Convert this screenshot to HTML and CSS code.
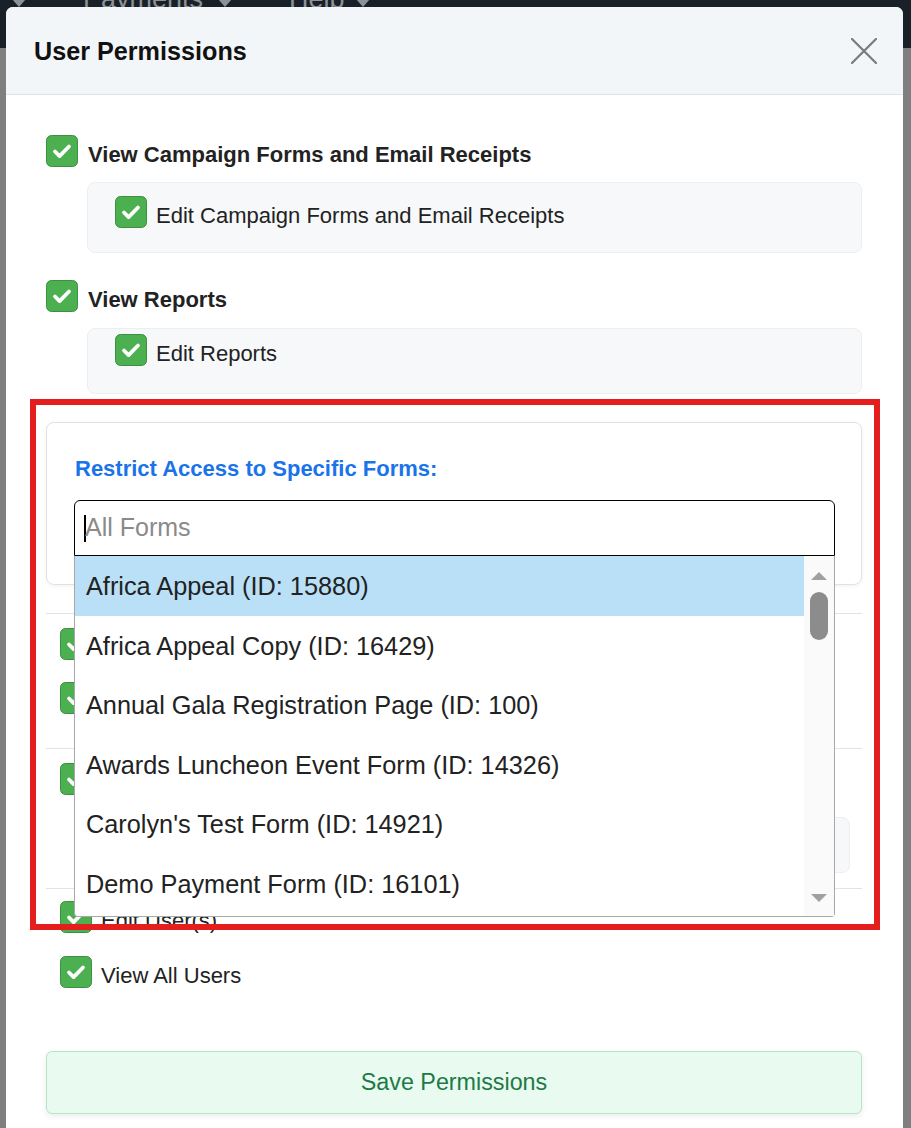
FILE: index.html
```html
<!DOCTYPE html>
<html lang="en">
<head>
<meta charset="utf-8">
<title>User Permissions</title>
<link rel="stylesheet" href="styles.css">
</head>
<body>
<div class="page">
  <nav class="topnav">
    <span class="nav-caret nav-caret--first"><svg viewBox="0 0 14 8" width="14" height="8"><polygon points="0,0 14,0 7,8" fill="#8d9298"/></svg></span>
    <span class="nav-item">Payments</span>
    <span class="nav-caret"><svg viewBox="0 0 14 8" width="14" height="8"><polygon points="0,0 14,0 7,8" fill="#8d9298"/></svg></span>
    <span class="nav-item">Help</span>
    <span class="nav-caret nav-caret--last"><svg viewBox="0 0 14 8" width="14" height="8"><polygon points="0,0 14,0 7,8" fill="#8d9298"/></svg></span>
  </nav>
</div>

<div class="modal">
  <header class="modal-header">
    <h2 class="modal-title">User Permissions</h2>
    <button class="close-btn" aria-label="Close">
      <svg viewBox="0 0 26 26" width="26" height="26"><path d="M1 1L25 25M25 1L1 25" stroke="#7a7a7a" stroke-width="2.2" stroke-linecap="round"/></svg>
    </button>
  </header>

  <div class="modal-body">
    <div class="check-row check-row--main">
      <svg class="cb" viewBox="0 0 32 32"><rect x=".5" y=".5" width="31" height="31" rx="5" fill="#4caf50" stroke="#3d8f41"/><path d="M9 16.5l4.6 4.6 9.4-9.6" fill="none" stroke="#fff" stroke-width="3.8" stroke-linecap="round" stroke-linejoin="round"/></svg>
      <span class="label label--bold">View Campaign Forms and Email Receipts</span>
    </div>
    <div class="sub-box sub-box--first">
      <div class="check-row">
        <svg class="cb" viewBox="0 0 32 32"><rect x=".5" y=".5" width="31" height="31" rx="5" fill="#4caf50" stroke="#3d8f41"/><path d="M9 16.5l4.6 4.6 9.4-9.6" fill="none" stroke="#fff" stroke-width="3.8" stroke-linecap="round" stroke-linejoin="round"/></svg>
        <span class="label">Edit Campaign Forms and Email Receipts</span>
      </div>
    </div>

    <div class="check-row check-row--main check-row--second">
      <svg class="cb" viewBox="0 0 32 32"><rect x=".5" y=".5" width="31" height="31" rx="5" fill="#4caf50" stroke="#3d8f41"/><path d="M9 16.5l4.6 4.6 9.4-9.6" fill="none" stroke="#fff" stroke-width="3.8" stroke-linecap="round" stroke-linejoin="round"/></svg>
      <span class="label label--bold">View Reports</span>
    </div>
    <div class="sub-box sub-box--second">
      <div class="check-row">
        <svg class="cb" viewBox="0 0 32 32"><rect x=".5" y=".5" width="31" height="31" rx="5" fill="#4caf50" stroke="#3d8f41"/><path d="M9 16.5l4.6 4.6 9.4-9.6" fill="none" stroke="#fff" stroke-width="3.8" stroke-linecap="round" stroke-linejoin="round"/></svg>
        <span class="label">Edit Reports</span>
      </div>
    </div>

    <div class="restrict-card">
      <div class="restrict-title">Restrict Access to Specific Forms:</div>
      <div class="select-wrap">
        <div class="select-input"><span class="text-caret"></span><span class="placeholder">All Forms</span></div>
        <div class="dropdown">
          <ul class="options">
            <li class="option option--active">Africa Appeal (ID: 15880)</li>
            <li class="option">Africa Appeal Copy (ID: 16429)</li>
            <li class="option">Annual Gala Registration Page (ID: 100)</li>
            <li class="option">Awards Luncheon Event Form (ID: 14326)</li>
            <li class="option">Carolyn's Test Form (ID: 14921)</li>
            <li class="option">Demo Payment Form (ID: 16101)</li>
          </ul>
          <div class="scrollbar">
            <svg class="sb-arrow" viewBox="0 0 16 8" width="16" height="8"><polygon points="0,8 16,8 8,0" fill="#a0a0a0"/></svg>
            <div class="sb-thumb"></div>
            <div class="sb-fill"></div>
            <svg class="sb-arrow" viewBox="0 0 16 8" width="16" height="8"><polygon points="0,0 16,0 8,8" fill="#a0a0a0"/></svg>
          </div>
        </div>
      </div>
    </div>

    <hr class="sep sep--first">
    <div class="section section--a">
      <div class="check-row">
        <svg class="cb" viewBox="0 0 32 32"><rect x=".5" y=".5" width="31" height="31" rx="5" fill="#4caf50" stroke="#3d8f41"/><path d="M9 16.5l4.6 4.6 9.4-9.6" fill="none" stroke="#fff" stroke-width="3.8" stroke-linecap="round" stroke-linejoin="round"/></svg>
      </div>
      <div class="check-row check-row--gap">
        <svg class="cb" viewBox="0 0 32 32"><rect x=".5" y=".5" width="31" height="31" rx="5" fill="#4caf50" stroke="#3d8f41"/><path d="M9 16.5l4.6 4.6 9.4-9.6" fill="none" stroke="#fff" stroke-width="3.8" stroke-linecap="round" stroke-linejoin="round"/></svg>
      </div>
    </div>
    <hr class="sep sep--b">
    <div class="section section--b">
      <div class="check-row">
        <svg class="cb" viewBox="0 0 32 32"><rect x=".5" y=".5" width="31" height="31" rx="5" fill="#4caf50" stroke="#3d8f41"/><path d="M9 16.5l4.6 4.6 9.4-9.6" fill="none" stroke="#fff" stroke-width="3.8" stroke-linecap="round" stroke-linejoin="round"/></svg>
      </div>
      <div class="inner-box"></div>
    </div>
    <hr class="sep sep--c">
    <div class="section section--c">
      <div class="check-row">
        <svg class="cb" viewBox="0 0 32 32"><rect x=".5" y=".5" width="31" height="31" rx="5" fill="#4caf50" stroke="#3d8f41"/><path d="M9 16.5l4.6 4.6 9.4-9.6" fill="none" stroke="#fff" stroke-width="3.8" stroke-linecap="round" stroke-linejoin="round"/></svg>
        <span class="label">Edit User(s)</span>
      </div>
      <div class="check-row check-row--users">
        <svg class="cb" viewBox="0 0 32 32"><rect x=".5" y=".5" width="31" height="31" rx="5" fill="#4caf50" stroke="#3d8f41"/><path d="M9 16.5l4.6 4.6 9.4-9.6" fill="none" stroke="#fff" stroke-width="3.8" stroke-linecap="round" stroke-linejoin="round"/></svg>
        <span class="label">View All Users</span>
      </div>
    </div>

    <button class="save-btn">Save Permissions</button>
  </div>

  <div class="annotation"></div>
</div>
</body>
</html>
```

FILE: styles.css
```css
* { box-sizing: border-box; }

html, body {
  margin: 0;
  padding: 0;
  height: 100%;
  overflow: hidden;
}

body {
  background: #7f7f7f;
  font-family: "Liberation Sans", Arial, sans-serif;
  color: #222;
}

.page {
  height: 100%;
}

.topnav {
  height: 48px;
  background: #1a2028;
  display: flex;
  align-items: flex-start;
  padding-left: 12px;
  overflow: hidden;
}

.nav-item {
  font-size: 27px;
  line-height: 27px;
  color: #8d9298;
  margin-top: -14px;
}

.nav-caret {
  display: block;
  margin-top: -1px;
  line-height: 0;
  margin-left: 15px;
  margin-right: 57px;
}

.nav-caret--first { margin-left: 0; }
.nav-caret--last { margin-left: 11px; margin-right: 0; }

.modal {
  position: absolute;
  left: 6px;
  top: 7px;
  width: 897px;
  height: 1140px;
  background: #fff;
  border-radius: 7px 7px 0 0;
  overflow: hidden;
}

.modal-header {
  height: 88px;
  background: #f3f6f9;
  border-bottom: 1px solid #dde3ea;
  display: flex;
  align-items: center;
  justify-content: space-between;
  padding: 1px 26px 0 28px;
}

.modal-title {
  margin: 0;
  font-size: 25.2px;
  font-weight: bold;
  color: #111;
}

.close-btn {
  border: 0;
  background: none;
  padding: 0;
  width: 26px;
  height: 26px;
  line-height: 0;
}

.modal-body {
  padding: 40px 41px 0 40px;
}

.check-row {
  display: flex;
  align-items: center;
}

.cb {
  width: 32px;
  height: 32px;
  flex: none;
}

.label {
  font-size: 22px;
  line-height: 25px;
  margin-left: 9px;
  padding-top: 6px;
  color: #222;
}

.label--bold {
  font-weight: bold;
  margin-left: 10px;
  padding-top: 7px;
}

.check-row--second { margin-top: 27px; }

.sub-box {
  margin-left: 41px;
  background: #f7f8fa;
  border: 1px solid #eceef1;
  border-radius: 8px;
  padding-left: 27px;
}

.sub-box--first {
  margin-top: 15px;
  padding-top: 13px;
  padding-bottom: 24px;
}

.sub-box--second {
  margin-top: 16px;
  padding-top: 5px;
  padding-bottom: 27px;
}

.restrict-card {
  margin-top: 28px;
  border: 1px solid #e2e2e2;
  border-radius: 8px;
  box-shadow: 0 1px 4px rgba(0, 0, 0, 0.06);
  padding: 33px 26px 28px 27px;
}

.restrict-title {
  font-size: 22px;
  line-height: 25px;
  font-weight: bold;
  color: #1a73e8;
  padding-left: 1px;
}

.select-wrap {
  position: relative;
  margin-top: 19px;
}

.select-input {
  height: 56px;
  border: 1px solid #000;
  border-radius: 6px 6px 0 0;
  display: flex;
  align-items: center;
  padding-left: 9px;
}

.text-caret {
  width: 2px;
  height: 27px;
  background: #000;
  margin-right: -1px;
}

.placeholder {
  font-size: 25px;
  color: #8a8a8a;
  margin-top: -2px;
}

.dropdown {
  position: absolute;
  left: 0;
  right: 0;
  top: 100%;
  height: 361px;
  background: #fff;
  border: 1px solid #a8a8a8;
  border-top: 0;
  border-radius: 0 0 4px 4px;
  display: flex;
  z-index: 5;
}

.options {
  list-style: none;
  margin: 0;
  padding: 0;
  flex: 1;
}

.option {
  height: 59.5px;
  line-height: 59.5px;
  padding-left: 11px;
  padding-top: 1px;
  font-size: 25.3px;
  color: #222;
  white-space: nowrap;
}

.option--active {
  background: #b9e0f7;
}

.scrollbar {
  width: 30px;
  background: #fafafa;
  display: flex;
  flex-direction: column;
  align-items: center;
  padding: 16px 0 14px;
}

.sb-thumb {
  width: 18px;
  height: 48px;
  border-radius: 9px;
  background: #8c8c8c;
  margin-top: 12px;
}

.sb-fill { flex: 1; }

.sep {
  margin: 0;
  border: 0;
  border-top: 1px solid #e3e3e3;
}

.sep--first { margin-top: 28px; }
.sep--b { margin-top: 34px; }
.sep--c { margin-top: 15px; }

.section {
  padding: 0 12px 0 14px;
}

.section--a { padding-top: 14px; }
.section--b { padding-top: 14px; }
.section--c { padding-top: 12px; }

.check-row--gap { margin-top: 22px; }
.check-row--users { margin-top: 23px; }

.inner-box {
  margin-top: 22px;
  margin-left: 40px;
  height: 56px;
  background: #f7f8fa;
  border: 1px solid #eceef1;
  border-radius: 8px;
}

.save-btn {
  display: block;
  width: 100%;
  margin-top: 63px;
  height: 63px;
  background: #e9faf0;
  border: 1px solid #b6e5c6;
  border-radius: 6px;
  box-shadow: 0 2px 6px rgba(0, 0, 0, 0.08);
  font-family: "Liberation Sans", Arial, sans-serif;
  font-size: 23.3px;
  color: #1d7a46;
}

.annotation {
  position: absolute;
  left: 24px;
  top: 392px;
  width: 850px;
  height: 531px;
  border: 6px solid #e41d1d;
  pointer-events: none;
  z-index: 10;
}
```
